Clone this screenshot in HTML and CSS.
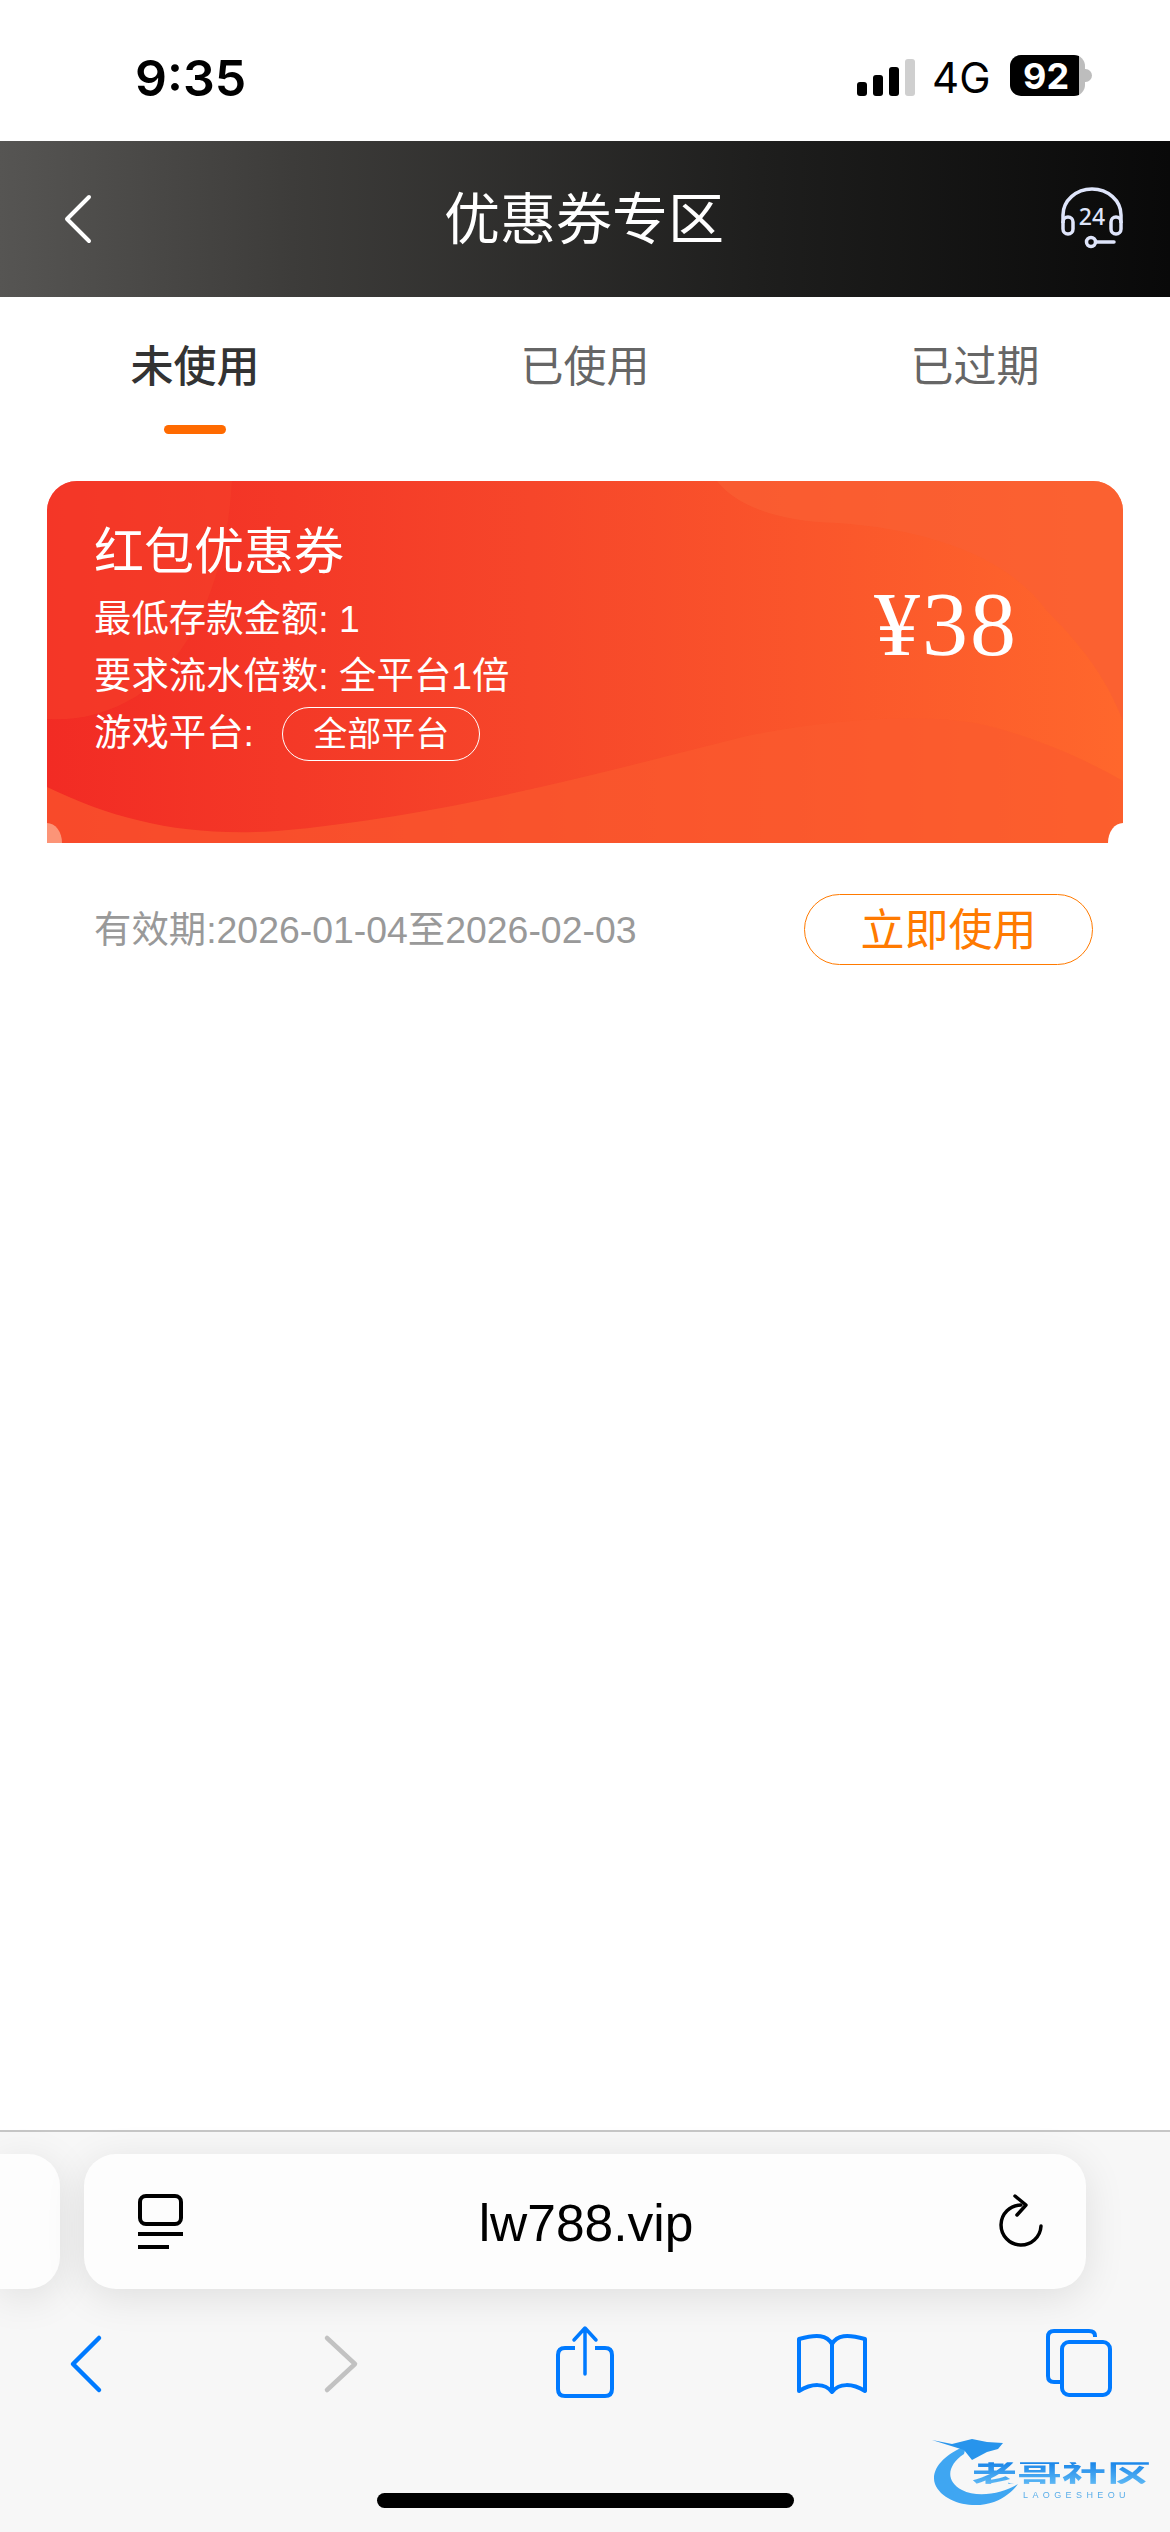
FILE: index.html
```html
<!DOCTYPE html>
<html lang="zh-CN">
<head>
    <meta charset="UTF-8">
    <meta name="viewport" content="width=device-width, initial-scale=1.0">
    <title>优惠券专区</title>
    <link rel="stylesheet" href="styles.css">
</head>
<body>
<div class="status-bar">
    <span class="clock">9:35</span>
    <div class="status-right">
        <div class="signal">
            <span class="bar bar-1"></span>
            <span class="bar bar-2"></span>
            <span class="bar bar-3"></span>
            <span class="bar bar-4"></span>
        </div>
        <span class="network">4G</span>
        <div class="battery"><span class="battery-level">92</span></div>
    </div>
</div>

<header class="page-header">
    <svg class="back-icon" width="30" height="50" viewBox="0 0 30 50">
        <path d="M26 3 L4 25 L26 47" fill="none" stroke="#fff" stroke-width="4" stroke-linecap="round" stroke-linejoin="round"/>
    </svg>
    <h1 class="page-title">优惠券专区</h1>
    <svg class="support-icon" width="64" height="64" viewBox="0 0 64 64">
        <path d="M3 36 V28 A29 26 0 0 1 61 28 V36" fill="none" stroke="#dfe5fb" stroke-width="3.5"/>
        <rect x="3" y="30" width="10" height="17" rx="5" fill="none" stroke="#dfe5fb" stroke-width="3.5"/>
        <rect x="51" y="30" width="10" height="17" rx="5" fill="none" stroke="#dfe5fb" stroke-width="3.5"/>
        <circle cx="31" cy="55" r="4.5" fill="none" stroke="#dfe5fb" stroke-width="3.5"/>
        <path d="M36 55 H54" stroke="#dfe5fb" stroke-width="3.5" stroke-linecap="round"/>
        <text x="32" y="38" class="support-text">24</text>
    </svg>
</header>

<nav class="tabs">
    <div class="tab tab-active">未使用</div>
    <div class="tab">已使用</div>
    <div class="tab">已过期</div>
</nav>

<main class="coupon-list">
    <div class="coupon">
        <svg class="coupon-bg" width="1076" height="362" viewBox="0 0 1076 362">
            <path d="M0 0 H185 C180 90 150 170 90 215 C60 233 30 240 0 238 Z" fill="#f6412a" opacity="0.5"/>
            <path d="M0 306 C70 340 140 356 230 350 C400 335 560 290 700 255 C800 235 900 230 960 250 C1010 265 1050 285 1076 300 V362 H0 Z" fill="#fb5a2e" opacity="0.65"/>
            <path d="M670 0 C690 25 730 40 790 42 C880 48 960 75 1000 130 C1040 170 1060 200 1076 240 V0 Z" fill="#fa5f33" opacity="0.7"/>
        </svg>
        <div class="coupon-info">
            <div class="coupon-title">红包优惠券</div>
            <div class="coupon-line">最低存款金额: 1</div>
            <div class="coupon-line">要求流水倍数: 全平台1倍</div>
            <div class="coupon-line">游戏平台: <span class="platform-tag">全部平台</span></div>
        </div>
        <div class="coupon-amount">¥38</div>
    </div>
    <div class="coupon-footer">
        <span class="coupon-date">有效期:2026-01-04至2026-02-03</span>
        <button class="use-btn">立即使用</button>
    </div>
</main>

<footer class="browser-bar">
    <div class="address-row">
        <div class="prev-tab"></div>
        <div class="address-pill">
            <svg width="46" height="56" viewBox="0 0 46 56">
                <rect x="2" y="2" width="41" height="28" rx="6" fill="none" stroke="#000" stroke-width="4"/>
                <path d="M0 40 H45" stroke="#000" stroke-width="4"/>
                <path d="M0 53 H31" stroke="#000" stroke-width="4"/>
            </svg>
            <span class="address-text">lw788.vip</span>
            <svg width="46" height="56" viewBox="0 0 46 56">
                <path d="M23 11 A20 20 0 1 0 43 32" fill="none" stroke="#000" stroke-width="3.5" stroke-linecap="round"/>
                <path d="M17 2 L28 11 L19 21" fill="none" stroke="#000" stroke-width="3.5" stroke-linecap="round" stroke-linejoin="round"/>
            </svg>
        </div>
    </div>
    <div class="tool-row">
        <svg width="70" height="80" viewBox="0 0 70 80">
            <path d="M49 16 L23 42 L49 68" fill="none" stroke="#007aff" stroke-width="4.5" stroke-linecap="round" stroke-linejoin="round"/>
        </svg>
        <svg width="70" height="80" viewBox="0 0 70 80">
            <path d="M21 16 L49 42 L21 68" fill="none" stroke="#c2c2c2" stroke-width="4.5" stroke-linecap="round" stroke-linejoin="round"/>
        </svg>
        <svg width="70" height="80" viewBox="0 0 70 80">
            <path d="M25 26 H15 Q8 26 8 33 V67 Q8 74 15 74 H55 Q62 74 62 67 V33 Q62 26 55 26 H45" fill="none" stroke="#007aff" stroke-width="4"/>
            <path d="M35 52 V7 M24 18 L35 6 L46 18" fill="none" stroke="#007aff" stroke-width="3.5" stroke-linecap="round" stroke-linejoin="round"/>
        </svg>
        <svg width="70" height="80" viewBox="0 0 70 80">
            <path d="M35 22 C30 13 20 12 2 17 V69 C15 61 28 61 35 70 C42 61 55 61 68 69 V17 C50 12 40 13 35 22 V70" fill="none" stroke="#007aff" stroke-width="4" stroke-linejoin="round"/>
        </svg>
        <svg width="70" height="80" viewBox="0 0 70 80">
            <path d="M51 15 V14 Q51 9 45 9 H10 Q4 9 4 15 V54 Q4 60 10 60 H17" fill="none" stroke="#007aff" stroke-width="4"/>
            <rect x="18" y="20" width="48" height="53" rx="7" fill="none" stroke="#007aff" stroke-width="4"/>
        </svg>
    </div>
    <div class="home-indicator"></div>
    <div class="watermark">
        <svg class="watermark-dragon" width="100" height="76" viewBox="0 0 100 76">
            <path d="M34 14 C12 22 -2 38 3 52 C10 70 40 78 62 70 C72 66 80 60 86 52 C70 62 45 66 30 58 C14 50 14 34 32 22 Z" fill="#3fa6f2"/>
            <path d="M0 8 L20 12 L40 7 L55 10 L71 11 L66 17 L55 20 L40 28 L32 18 Z" fill="#2794ec"/>
        </svg>
        <div class="watermark-name">老哥社区</div>
        <div class="watermark-sub">LAOGESHEOU</div>
    </div>
</footer>
</body>
</html>
```

FILE: styles.css
```css
body {
    margin: 0;
    width: 1170px;
    height: 2532px;
    display: flex;
    flex-direction: column;
    overflow: hidden;
    background-color: #fff;
    font-family: "Liberation Sans", "Noto Sans CJK SC", sans-serif;
}

/* status bar */
.status-bar {
    height: 141px;
    flex: none;
    display: flex;
    align-items: flex-start;
    justify-content: space-between;
    padding: 46px 85px 0 135px;
    box-sizing: border-box;
}

.clock {
    font-family: Inter, sans-serif;
    font-size: 50px;
    font-weight: 600;
    line-height: 64px;
    color: #000;
}

.status-right {
    display: flex;
    align-items: flex-start;
    padding-top: 11px;
}

.signal {
    display: flex;
    align-items: flex-end;
    gap: 6px;
    height: 37px;
    margin-top: 2px;
}

.bar {
    width: 10px;
    border-radius: 3px;
    background-color: #000;
}

.bar-1 { height: 14px; }
.bar-2 { height: 21px; }
.bar-3 { height: 29px; }
.bar-4 { height: 37px; background-color: #cfcfcf; }

.network {
    font-family: Inter, sans-serif;
    font-size: 42px;
    line-height: 42px;
    color: #000;
    margin: 0 23px 0 17px;
    width: 55px;
}

.battery {
    position: relative;
    width: 75px;
    height: 41px;
    margin-top: -2px;
    border-radius: 11px;
    background: linear-gradient(to right, #000 92%, #bdbdbd 92%);
    display: flex;
    align-items: center;
    padding-left: 13px;
    box-sizing: border-box;
}

.battery::after {
    content: "";
    position: absolute;
    right: -7px;
    top: 14px;
    width: 7px;
    height: 13px;
    border-radius: 0 7px 7px 0;
    background-color: #bdbdbd;
}

.battery-level {
    font-family: Inter, sans-serif;
    font-size: 36px;
    font-weight: 700;
    color: #fff;
}

/* page header */
.page-header {
    height: 156px;
    flex: none;
    display: flex;
    align-items: center;
    justify-content: space-between;
    padding: 0 46px 0 63px;
    box-sizing: border-box;
    background: linear-gradient(to right, #565553, #3d3c3a 25%, #1e1e1d 65%, #090909);
}

.page-title {
    margin: 0 0 10px 15px;
    font-size: 56px;
    font-weight: 400;
    color: #fff;
    font-family: "Noto Sans CJK SC", sans-serif;
}

.support-text {
    font-family: "Noto Sans", sans-serif;
    font-size: 23px;
    font-weight: 500;
    fill: #dfe5fb;
    text-anchor: middle;
}

/* tabs */
.tabs {
    height: 184px;
    flex: none;
    display: grid;
    grid-template-columns: repeat(3, 390px);
    padding-top: 36px;
    box-sizing: border-box;
}

.tab {
    position: relative;
    font-family: "Noto Sans CJK SC", sans-serif;
    font-size: 43px;
    line-height: 60px;
    height: 60px;
    text-align: center;
    color: #666;
}

.tab-active {
    color: #333;
    font-weight: 500;
}

.tab-active::after {
    content: "";
    position: absolute;
    left: 164px;
    top: 92px;
    width: 62px;
    height: 9px;
    border-radius: 5px;
    background-color: #ff6a00;
}

/* coupon */
.coupon-list {
    flex: 1;
    padding: 0 47px;
}

.coupon {
    position: relative;
    height: 362px;
    display: flex;
    justify-content: space-between;
    overflow: hidden;
    border-radius: 30px 30px 0 0;
    background: linear-gradient(to right, #f22b24, #f6462a 45%, #ff672c);
    color: #fff;
}

.coupon::before,
.coupon::after {
    content: "";
    position: absolute;
    bottom: -20px;
    width: 30px;
    height: 40px;
    border-radius: 50%;
    background-color: #fff;
}

.coupon::before { left: -15px; }
.coupon::after { right: -15px; }

.coupon-bg {
    position: absolute;
    left: 0;
    top: 0;
}

.coupon-info {
    position: relative;
    padding: 41px 0 0 47px;
}

.coupon-title {
    font-size: 50px;
    line-height: 60px;
    margin-bottom: 9px;
}

.coupon-line {
    display: flex;
    align-items: center;
    white-space: pre;
    font-size: 37.4px;
    line-height: 57px;
    height: 57px;
}

.platform-tag {
    display: inline-block;
    margin-left: 18px;
    width: 198px;
    height: 54px;
    line-height: 52px;
    box-sizing: border-box;
    border: 1px solid #fff;
    border-radius: 28px;
    font-size: 34px;
    text-align: center;
}

.coupon-amount {
    position: relative;
    margin: 93px 105px 0 0;
    font-family: "Liberation Serif", serif;
    font-size: 92px;
    letter-spacing: 2px;
    line-height: 100px;
}

.coupon-footer {
    display: flex;
    align-items: center;
    justify-content: space-between;
    margin-top: 51px;
    padding: 0 30px 0 47px;
}

.coupon-date {
    font-size: 37.4px;
    margin-bottom: 5px;
    color: #999;
}

.use-btn {
    width: 289px;
    height: 71px;
    padding: 0 0 7px;
    border: 1.5px solid #ff7a00;
    border-radius: 36px;
    background-color: #fff;
    color: #ff7a00;
    font-family: "Noto Sans CJK SC", sans-serif;
    font-size: 44px;
    cursor: pointer;
}

/* browser chrome */
.browser-bar {
    position: relative;
    height: 402px;
    flex: none;
    border-top: 2px solid #c6c6c6;
    box-sizing: border-box;
    background-color: #f7f7f7;
}

.address-row {
    display: flex;
    gap: 24px;
    padding-top: 22px;
}

.prev-tab {
    width: 60px;
    height: 135px;
    border-radius: 0 32px 32px 0;
    background-color: #fdfdfd;
    box-shadow: 0 8px 40px rgba(0, 0, 0, 0.1);
}

.address-pill {
    width: 1002px;
    height: 135px;
    display: flex;
    align-items: center;
    justify-content: space-between;
    padding: 0 42px 0 54px;
    box-sizing: border-box;
    border-radius: 32px;
    background-color: #fdfdfd;
    box-shadow: 0 8px 40px rgba(0, 0, 0, 0.1);
}

.address-text {
    font-size: 51.5px;
    margin: 3px 10px 0 0;
    color: #000;
}

.tool-row {
    display: grid;
    grid-template-columns: 256px 244px 247px 247px 70px;
    padding: 33px 0 0 50px;
}

.home-indicator {
    width: 417px;
    height: 15px;
    margin: 91px auto 0;
    border-radius: 8px;
    background-color: #000;
}

.watermark {
    position: absolute;
    left: 932px;
    top: 300px;
    width: 224px;
    height: 76px;
    filter: blur(0.5px);
}

.watermark-dragon {
    position: absolute;
    left: 0;
    top: 0;
}

.watermark-name {
    position: absolute;
    left: 40px;
    top: 26px;
    height: 30px;
    font-family: "Noto Sans CJK SC", sans-serif;
    font-size: 45px;
    font-weight: 700;
    line-height: 30px;
    white-space: nowrap;
    background: linear-gradient(to bottom, #1a85e8, #5cb8f5);
    -webkit-background-clip: text;
    background-clip: text;
    color: transparent;
    transform: scaleY(0.72);
}

.watermark-sub {
    position: absolute;
    left: 91px;
    top: 58px;
    font-size: 9px;
    line-height: 11px;
    letter-spacing: 4.4px;
    white-space: nowrap;
    color: #5aaeea;
}
```
